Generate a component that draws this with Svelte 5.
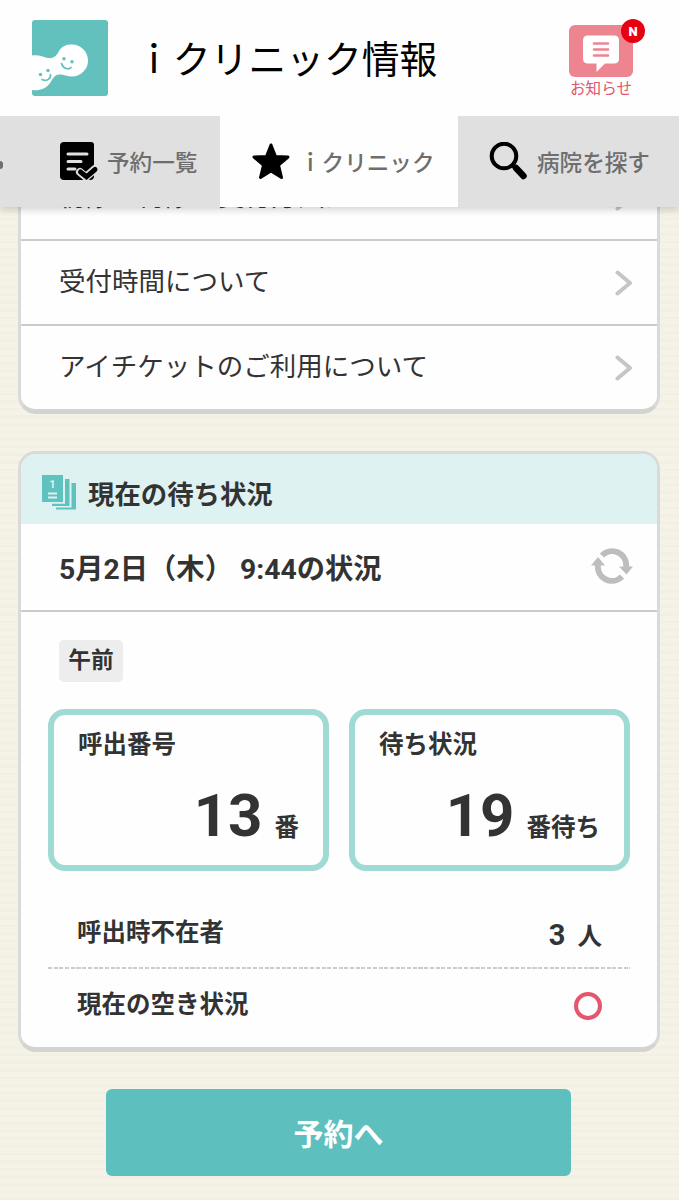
<script lang="ts">
  type Row = { label: string };
  type Counter = { label: string; value: number; unit: string };

  const rows: Row[] = [
    { label: '初診・再診の受付方法について' },
    { label: '受付時間について' },
    { label: 'アイチケットのご利用について' }
  ];

  const counters: Counter[] = [
    { label: '呼出番号', value: 13, unit: '番' },
    { label: '待ち状況', value: 19, unit: '番待ち' }
  ];
</script>

<div class="screen">
  <header class="header">
    <svg class="logo" viewBox="0 0 76 76" width="76" height="76">
      <rect width="76" height="76" rx="3" fill="#62c0bd" />
      <path
        d="M0 35.500C7 34.500 11 37 16 38C22 39 25 35 27 31C30 26 34 24.500 40 24.500A16 16 0 0 1 40 56.500C35 56.500 31 54 27 54.500C22 55 21 59 18 63C14 69 7 71 0 70Z"
        fill="#fff"
      />
      <g fill="#62c0bd">
        <circle cx="32" cy="38.800" r="1.700" />
        <circle cx="40" cy="41.700" r="1.700" />
        <circle cx="8.500" cy="54.500" r="1.700" />
        <circle cx="16" cy="50.500" r="1.700" />
      </g>
      <g fill="none" stroke="#62c0bd" stroke-width="1.700" stroke-linecap="round">
        <path d="M29.500 43.500C31 49 37 50 39 47.500" />
        <path d="M10 59.500C14 62 19 59 18.500 54.500" />
      </g>
    </svg>
    <h1>ｉクリニック情報</h1>
    <div class="notice">
      <svg viewBox="0 0 64 52" width="64" height="52">
        <rect width="64" height="52" rx="6" fill="#ef8491" />
        <path
          d="M19 10.500H45Q50 10.500 50 15.500V33.500Q50 38.500 45 38.500H36L27.500 47V38.500H19Q14 38.500 14 33.500V15.500Q14 10.500 19 10.500Z"
          fill="#fff"
        />
        <path d="M25 18.500H39M25 24.500H39M25 30.500H39" stroke="#ef8491" stroke-width="2.600" stroke-linecap="round" />
      </svg>
      <span class="notice__label">お知らせ</span>
      <span class="notice__badge">N</span>
    </div>
  </header>

  <nav class="tabs">
    <div class="tab tab--list">
      <span class="tab__edge"></span>
      <svg viewBox="0 0 39 39" width="39" height="39">
        <path d="M4 0H31Q34 0 34 3V34Q34 38 30 38H4Q0 38 0 34V4Q0 0 4 0Z" />
        <path d="M8 12H27M8 19.500H21M8 27H15" stroke="#e0e0e0" stroke-width="3" stroke-linecap="round" />
        <path d="M20 30L26 35L35 27" fill="none" stroke="#e0e0e0" stroke-width="8" stroke-linecap="round" stroke-linejoin="round" />
        <path d="M20.500 30L26.500 34.800L35 27.500" fill="none" stroke="#000" stroke-width="5" stroke-linecap="round" />
      </svg>
      <span>予約一覧</span>
    </div>
    <div class="tab tab--active">
      <svg viewBox="0 0 38 37" width="38" height="37">
        <path
          d="M19 2L23.500 13.500L36 14L26.500 22.200L29.500 34.500L19 28L8.500 34.500L11.500 22.200L2 14L14.500 13.500Z"
          stroke="#000"
          stroke-width="3"
          stroke-linejoin="round"
        />
      </svg>
      <span>ｉクリニック</span>
    </div>
    <div class="tab tab--search">
      <svg viewBox="0 0 39 39" width="39" height="39">
        <circle cx="15" cy="14" r="12.300" fill="none" stroke="#000" stroke-width="4" />
        <path d="M23 22.500L26.500 26" stroke="#000" stroke-width="4" />
        <path d="M27 26L34.500 34" stroke="#000" stroke-width="6.500" stroke-linecap="round" />
      </svg>
      <span>病院を探す</span>
    </div>
  </nav>

  <main class="content">
    <section class="card card--menu">
      {#each rows as row}
        <div class="row">
          <span>{row.label}</span>
          <svg viewBox="0 0 18 26" width="18" height="26">
            <path d="M2.500 2.500L15 13L2.500 23.500" fill="none" stroke="#c6c6c6" stroke-width="4" stroke-linecap="round" stroke-linejoin="round" />
          </svg>
        </div>
      {/each}
    </section>

    <section class="card">
      <div class="card__title">
        <svg viewBox="0 0 35 35" width="35" height="35">
          <path d="M0 0H21V27H0ZM23 4H27.500V31H10V28.700H23ZM29.500 8H34V34.500H14V32.500H29.500Z" fill="#5fc2bf" />
          <path d="M6 18.500H15M6 22.500H15" stroke="#def2f1" stroke-width="1.800" />
          <text x="10.500" y="13" text-anchor="middle">1</text>
        </svg>
        <h2>現在の待ち状況</h2>
      </div>

      <div class="status">
        <span>5月2日（木） 9:44の状況</span>
        <svg viewBox="0 0 42 36" width="42" height="36">
          <g fill="none" stroke="#bdbdbd" stroke-width="6">
            <path d="M11 7.500A14 14 0 0 1 35 19" />
            <path d="M31 28.500A14 14 0 0 1 7 17" />
          </g>
          <path d="M28 18.500H42L35.500 26.500ZM0 17.500H14L7 9Z" fill="#bdbdbd" />
        </svg>
      </div>

      <div class="body">
        <span class="period">午前</span>
        <div class="counters">
          {#each counters as counter}
            <div class="counter">
              <div class="counter__label">{counter.label}</div>
              <div class="counter__value">
                <strong>{counter.value}</strong>
                <span>{counter.unit}</span>
              </div>
            </div>
          {/each}
        </div>
        <div class="detail detail--absent">
          <span>呼出時不在者</span>
          <span class="detail__value"><b>3</b>人</span>
        </div>
        <div class="detail">
          <span>現在の空き状況</span>
          <span class="vacancy"></span>
        </div>
      </div>
    </section>

    <button class="reserve">予約へ</button>
  </main>
</div>

<style>
  :global(body) {
    margin: 0;
  }
  .screen {
    width: 679px;
    height: 1200px;
    display: flex;
    flex-direction: column;
    overflow: hidden;
    color: #333;
    font-family: Roboto, 'Noto Sans CJK JP', sans-serif;
    background: repeating-linear-gradient(#f5f3e7 0 5px, #f1f0e2 5px 7.6px);
  }
  .header {
    flex: none;
    position: relative;
    z-index: 2;
    box-sizing: border-box;
    height: 116px;
    padding: 20px 46px 0 32px;
    display: flex;
    align-items: flex-start;
    background: #fefefe;
  }
  h1 {
    flex: 1;
    margin: 13px 0 0 27px;
    font-size: 37.8px;
    line-height: 54px;
    font-weight: 400;
    color: #000;
    white-space: nowrap;
  }
  .notice {
    position: relative;
    width: 64px;
    padding-top: 5px;
    display: flex;
    flex-direction: column;
    align-items: center;
  }
  .notice__label {
    margin-top: 2px;
    font-size: 15.6px;
    line-height: 20px;
    color: #e0566c;
    white-space: nowrap;
  }
  .notice__badge {
    position: absolute;
    top: -1px;
    right: -12px;
    width: 24px;
    height: 24px;
    border-radius: 50%;
    background: #e60012;
    color: #fff;
    font-size: 13px;
    font-weight: 900;
    line-height: 25px;
    text-align: center;
  }
  .tabs {
    flex: none;
    position: relative;
    z-index: 1;
    height: 91px;
    display: flex;
    background: #e0e0e0;
    box-shadow: 0 2px 8px rgba(0, 0, 0, 0.2);
    color: #6e6e6e;
    font-size: 22.6px;
    font-weight: 500;
    white-space: nowrap;
  }
  .tab {
    box-sizing: border-box;
    display: flex;
    align-items: center;
  }
  .tab svg {
    flex: none;
  }
  .tab--list {
    width: 220px;
  }
  .tab--list svg {
    margin: 0 8px 0 57px;
  }
  .tab__edge {
    width: 3px;
    height: 8px;
    margin-top: 6px;
    border-radius: 0 4px 4px 0;
    background: #6e6e6e;
  }
  .tab--active {
    width: 238px;
    padding-left: 32px;
    background: #fefefe;
  }
  .tab--active svg {
    margin-right: 9px;
  }
  .tab--search {
    width: 221px;
    padding-left: 31px;
  }
  .tab--search svg {
    margin-right: 9px;
  }
  .content {
    flex: 1;
    min-height: 0;
    overflow: hidden;
    padding: 0 19px 0 18px;
    display: flex;
    flex-direction: column;
  }
  .card {
    flex: none;
    border: 3px solid #dadada;
    border-bottom: 5px solid #d3d3d0;
    border-radius: 18px;
    background: #fefefe;
    overflow: hidden;
  }
  .card--menu {
    margin: -54px 0 37px;
  }
  .row {
    box-sizing: border-box;
    height: 85px;
    padding: 0 24px 7px 38px;
    display: flex;
    align-items: center;
    justify-content: space-between;
    border-bottom: 2px solid #ccc;
    font-size: 26.5px;
  }
  .row svg {
    margin-top: 8px;
  }
  .row:last-child {
    border-bottom: 0;
    height: 83px;
  }
  .card__title {
    box-sizing: border-box;
    height: 70px;
    padding: 6px 0 0 21px;
    display: flex;
    align-items: center;
    background: #def2f1;
  }
  .card__title svg {
    margin-right: 11px;
  }
  .card__title text {
    fill: #def2f1;
    font-size: 11px;
    font-weight: 700;
  }
  h2 {
    margin: 0;
    font-size: 26.4px;
    font-weight: 700;
  }
  .status {
    box-sizing: border-box;
    height: 88px;
    padding: 0 24px 2px 38px;
    display: flex;
    align-items: center;
    justify-content: space-between;
    border-bottom: 2px solid #ccc;
    font-size: 28.3px;
    font-weight: 700;
  }
  .body {
    height: 435px;
    padding: 28px 27px 0;
    box-sizing: border-box;
    font-size: 24.5px;
    font-weight: 700;
  }
  .period {
    display: block;
    width: 64px;
    height: 42px;
    margin-left: 11px;
    border-radius: 5px;
    background: #ededed;
    font-size: 22.7px;
    line-height: 42px;
    text-align: center;
  }
  .counters {
    margin-top: 27px;
    display: grid;
    grid-template-columns: 281px 281px;
    justify-content: space-between;
  }
  .counter {
    box-sizing: border-box;
    height: 162px;
    padding: 12px 24px 0;
    border: 6px solid #9fdad4;
    border-radius: 17px;
  }
  .counter__label {
    line-height: 36px;
  }
  .counter__value {
    display: flex;
    align-items: baseline;
    justify-content: flex-end;
    margin-top: 17px;
    line-height: 72px;
  }
  .counter__value strong {
    margin-right: 12px;
    font-size: 60px;
    font-weight: 700;
  }
  .detail {
    height: 66px;
    padding: 0 28px 0 29px;
    display: flex;
    align-items: center;
    justify-content: space-between;
  }
  .detail--absent {
    box-sizing: border-box;
    height: 98px;
    padding-top: 21px;
    background: repeating-linear-gradient(90deg, #ccc 0 4px, transparent 4px 5.700px) bottom / 100% 2px no-repeat;
  }
  .detail__value {
    margin-top: 8px;
  }
  .detail__value b {
    margin-right: 12px;
    font-size: 29px;
    font-weight: 700;
  }
  .vacancy {
    box-sizing: border-box;
    width: 28px;
    height: 28px;
    margin-top: 7px;
    border: 4px solid #e4566d;
    border-radius: 50%;
  }
  .reserve {
    flex: none;
    align-self: center;
    width: 465px;
    height: 87px;
    margin: 37px 1px 0 0;
    padding: 0 0 2px;
    border: 0;
    border-radius: 6px;
    background: #5ec0be;
    color: #fff;
    font: inherit;
    font-size: 30px;
    font-weight: 700;
  }
</style>
